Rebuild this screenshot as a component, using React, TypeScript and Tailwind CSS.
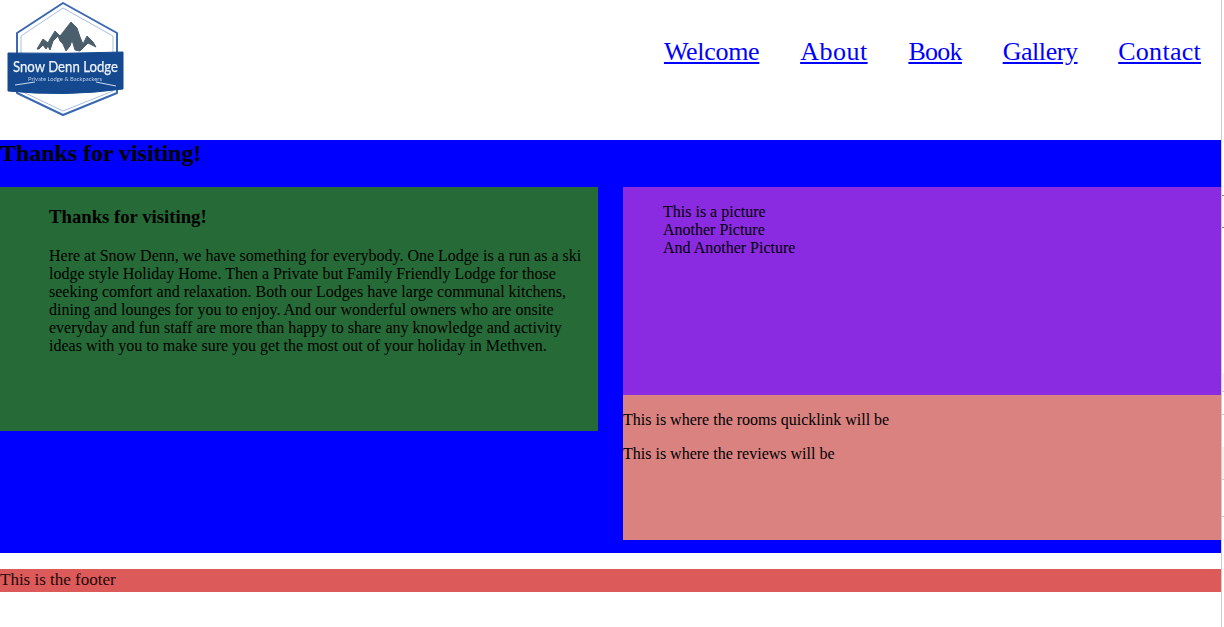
const serif = "font-['Liberation_Serif','Times_New_Roman',serif]";

function Logo() {
  return (
    <svg width="140" height="120" viewBox="0 0 140 120" className="block blur-[0.5px]">
      <path d="M63 3 L117 33 L117 93 L63 115 L17 93 L17 33 Z" fill="#fff" stroke="#3a68b2" strokeWidth="2" strokeLinejoin="round" />
      <path d="M63 8 L113 36 L113 91 L63 111 L21 91 L21 36 Z" fill="#fff" stroke="#a9bfe0" strokeWidth="1" strokeLinejoin="round" />
      <path d="M37 49 L43 39 L48 43 L50 39 L55 31 L60 36 L64 31 L71 22 L77 28 L80 37 L83 44 L87 36 L93 42 L96 47 L88 43 L84 47 L80 51 L75 50 L72 40 L70 46 L66 51 L63 44 L60 41 L58 36 L53 41 L50 50 L48 46 L46 49 L43 45 L39 49 Z" fill="#4a5f6b" stroke="#4a5f6b" strokeWidth="1" strokeLinejoin="round" />
      <path d="M8 53 Q65 54 123 52 L123 89 Q65 97 8 91 Z" fill="#15498f" stroke="#15498f" strokeWidth="1" strokeLinejoin="round" />
      <text x="13" y="72" textLength="105" lengthAdjust="spacingAndGlyphs" fontFamily="Lato, sans-serif" fontSize="16" stroke="#eef3fa" strokeWidth="0.25" fill="#eef3fa">Snow Denn Lodge</text>
      <text x="28" y="80.5" textLength="74" lengthAdjust="spacingAndGlyphs" fontFamily="Lato, sans-serif" fontSize="5.6" fill="#b9cbe6">Private Lodge &amp; Backpackers</text>
      <path d="M15 85 L35 82 M96 82 L116 86" stroke="#c9d7ec" strokeWidth="1.2" />
    </svg>
  );
}

const nav = [
  { label: "Welcome", cls: "tracking-[-0.3px]" },
  { label: "About", cls: "tracking-[0.5px]" },
  { label: "Book", cls: "tracking-[-0.7px]" },
  { label: "Gallery", cls: "tracking-[-0.45px]" },
  { label: "Contact", cls: "tracking-[0.27px]" },
];

function EdgeStrip() {
  return (
    <aside className="w-[3px] min-h-[627px] border-l border-[#cccccc] flex flex-col">
      <div className="mt-[195px] h-px bg-[#888888]" />
      <div className="h-[31px] bg-[#f4f4f4]" />
      <div className="h-px bg-[#888888]" />
      <div className="mt-[145px] h-[18px] bg-[#f0f0f0]" />
      <div className="h-px bg-[#cccccc]" />
      <div className="mt-[22px] h-px bg-[#cccccc]" />
      <div className="mt-[32px] h-[32px] bg-[#f0f0f0]" />
      <div className="h-px bg-[#cccccc]" />
      <div className="mt-[36px] h-px bg-[#cccccc]" />
    </aside>
  );
}

export default function App() {
  return (
    <div className={`${serif} flex w-[1224px] min-h-[627px] text-base leading-[18px] text-black bg-white`}>
      <div className="w-[1221px] shrink-0">
        <header className="h-[140px] flex items-start justify-between">
          <Logo />
          <nav className="flex gap-[40.75px] pr-[20px] pt-[34px] text-[26px] leading-[36px]">
            {nav.map((n) => (
              <a key={n.label} href="#" className={`text-[#0000ff] underline ${n.cls}`}>{n.label}</a>
            ))}
          </nav>
        </header>
        <main className="bg-[#0000ff] h-[413px] flex flex-col">
          <h2 className="h-[47px] text-2xl leading-[27px] font-bold tracking-[-0.05px]">Thanks for visiting!</h2>
          <div className="grid grid-cols-[598px_598px] gap-x-[25px] items-start">
            <section className="bg-[#266b37] h-[244px] pl-[49px] pr-[15px] pt-[19px]">
              <h3 className="text-[18.72px] leading-[21px] font-bold mb-[20px]">Thanks for visiting!</h3>
              <p>Here at Snow Denn, we have something for everybody. One Lodge is a run as a ski lodge style Holiday Home. Then a Private but Family Friendly Lodge for those seeking comfort and relaxation. Both our Lodges have large communal kitchens, dining and lounges for you to enjoy. And our wonderful owners who are onsite everyday and fun staff are more than happy to share any knowledge and activity ideas with you to make sure you get the most out of your holiday in Methven.</p>
            </section>
            <div className="flex flex-col">
              <ul className="bg-[#8a2be2] h-[208px] pl-[40px] pt-[16px]">
                <li>This is a picture</li>
                <li>Another Picture</li>
                <li>And Another Picture</li>
              </ul>
              <div className="bg-[#d98280] h-[145px] pt-[16px]">
                <p className="mb-[16px]">This is where the rooms quicklink will be</p>
                <p>This is where the reviews will be</p>
              </div>
            </div>
          </div>
        </main>
        <footer className="mt-[16px] h-[23px] bg-[#dc5a5a] text-[17px] leading-[21px] text-[#220808]">This is the footer</footer>
      </div>
      <EdgeStrip />
    </div>
  );
}
